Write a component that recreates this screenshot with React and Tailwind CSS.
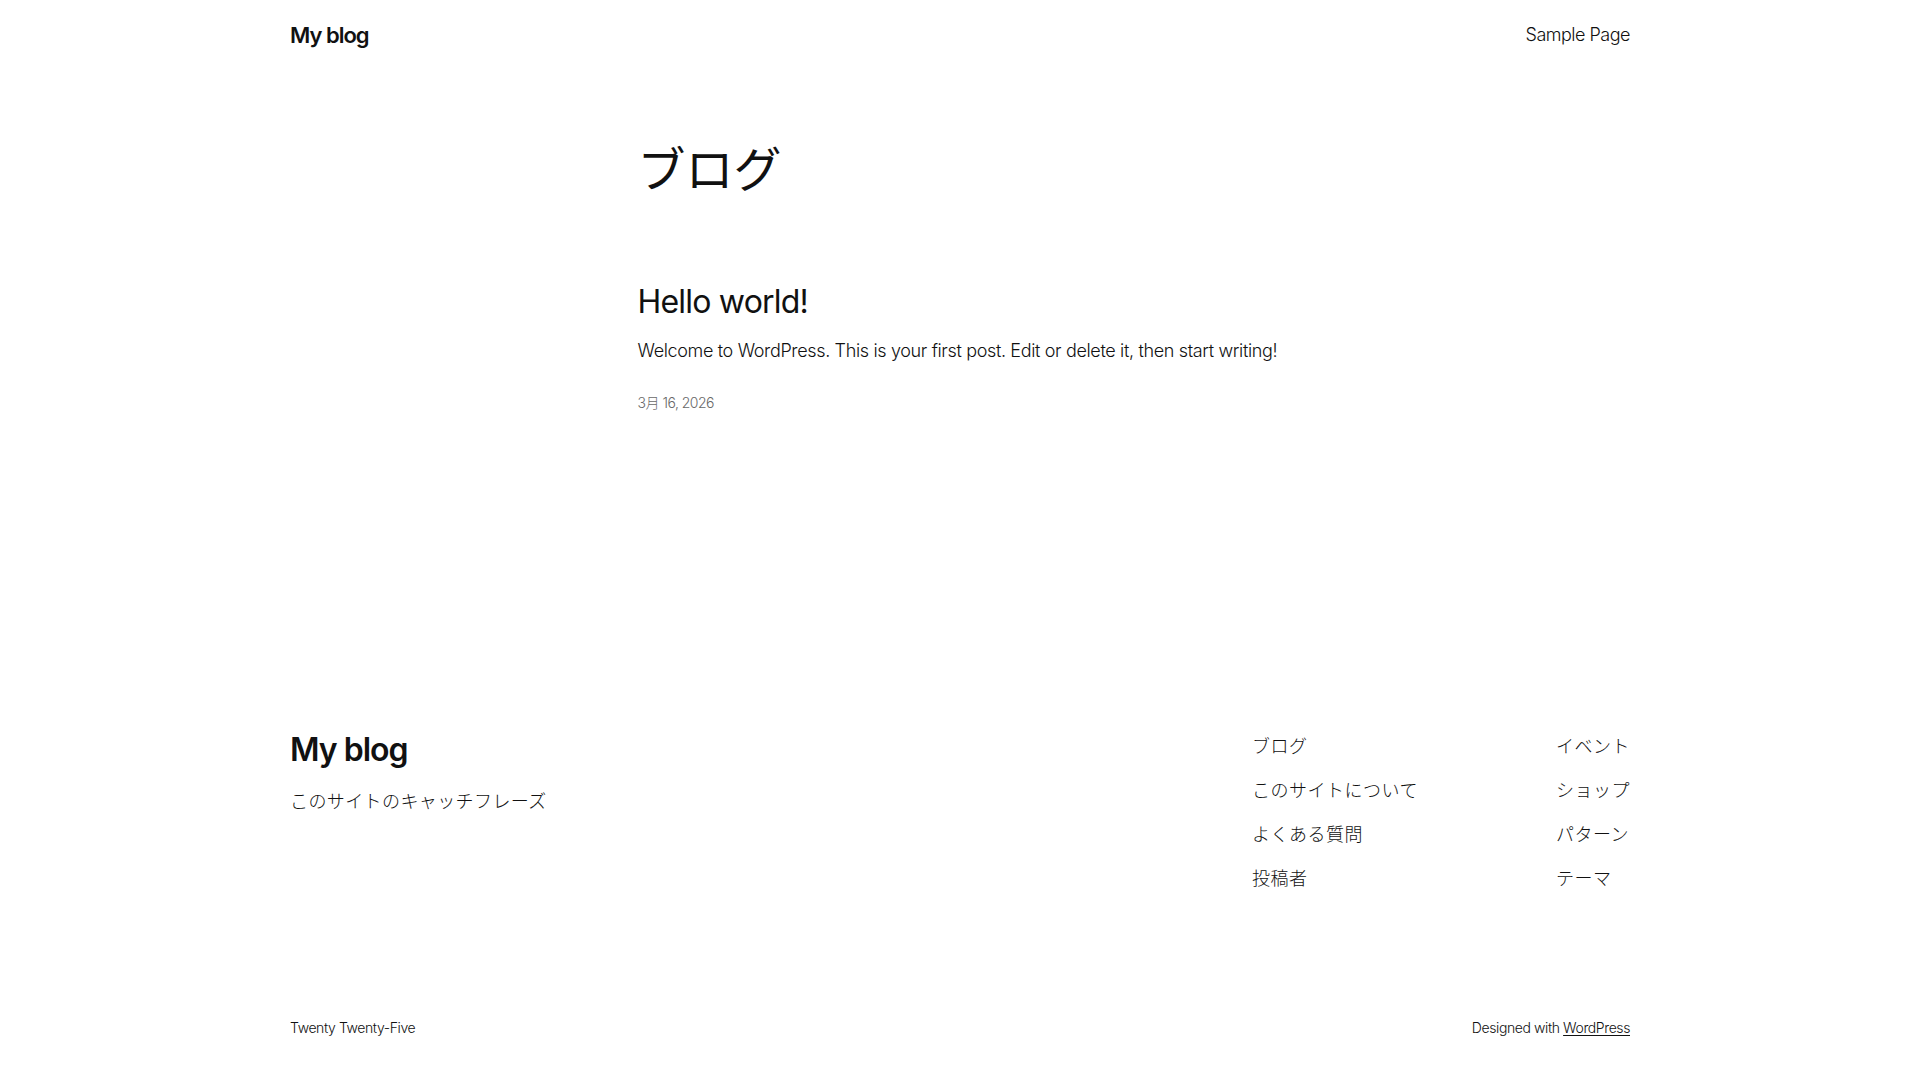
const font = { fontFamily: '"Inter", "Noto Sans CJK JP", sans-serif' }

const navLeft = ['ブログ', 'このサイトについて', 'よくある質問', '投稿者']
const navRight = ['イベント', 'ショップ', 'パターン', 'テーマ']

export default function App() {
  return (
    <div className="min-h-screen bg-white text-[#111111] font-light" style={font}>
      {/* Header */}
      <header className="mx-auto flex h-[70px] w-[1340px] items-center justify-between">
        <a href="#" className="text-[22px] font-semibold leading-none tracking-[-1px]">My blog</a>
        <nav>
          <a href="#" className="text-[18px] leading-none tracking-[-0.5px]">Sample Page</a>
        </nav>
      </header>

      {/* Main */}
      <main className="mx-auto w-[645px]">
        <h1 className="mt-[71px] text-[48px] font-normal leading-[1.2]">ブログ</h1>

        <article className="mt-[84px]">
          <h2 className="text-[32px] font-normal leading-[1.2] tracking-[-0.8px]">Hello world!</h2>
          <p className="mt-[17px] text-[18px] leading-[1.4] tracking-[-0.35px]">
            Welcome to WordPress. This is your first post. Edit or delete it, then start writing!
          </p>
          <div className="mt-[30px] text-[14px] leading-[1.4] tracking-[-0.5px] text-[#686868]">3月 16, 2026</div>
        </article>
      </main>

      {/* Footer */}
      <footer className="mx-auto mt-[318px] w-[1340px]">
        <div className="flex items-start justify-between">
          <div>
            <div className="text-[32px] font-semibold leading-[1.2] tracking-[-1px]">My blog</div>
            <p className="mt-[20px] text-[18px] leading-[1.4] tracking-[0.4px]">このサイトのキャッチフレーズ</p>
          </div>
          <div className="mt-[3px] flex gap-[138px]">
            <ul className="flex flex-col gap-[19px] text-[18px] leading-[1.4] tracking-[0.5px]">
              {navLeft.map((item) => (
                <li key={item}><a href="#">{item}</a></li>
              ))}
            </ul>
            <ul className="flex flex-col gap-[19px] text-[18px] leading-[1.4] tracking-[0.5px]">
              {navRight.map((item) => (
                <li key={item}><a href="#">{item}</a></li>
              ))}
            </ul>
          </div>
        </div>

        <div className="mt-[126px] flex items-center justify-between pb-[40px] text-[14px] leading-[1.4] tracking-[-0.4px]">
          <p>Twenty Twenty-Five</p>
          <p>
            Designed with <a href="#" className="underline underline-offset-2">WordPress</a>
          </p>
        </div>
      </footer>
    </div>
  )
}
